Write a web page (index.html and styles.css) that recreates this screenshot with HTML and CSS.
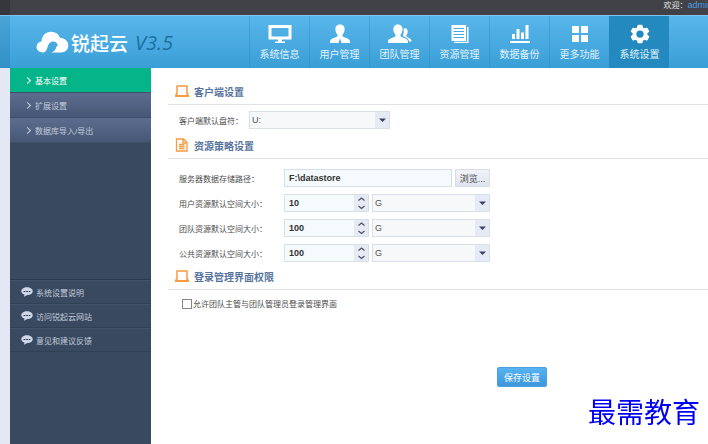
FILE: index.html
```html
<!DOCTYPE html>
<html lang="zh-CN">
<head>
    <meta charset="UTF-8">
    <meta name="viewport" content="width=device-width, initial-scale=1.0">
    <title>锐起云 - 系统设置</title>
    <link rel="stylesheet" href="styles.css">
</head>
<body>
    <div class="topbar">
        <span class="welcome">欢迎：<a href="#">admin</a></span>
    </div>

    <header class="header">
        <div class="logo">
            <svg width="34" height="22" viewBox="0 0 34 22">
                <path fill="#fff" d="M7 21.500C3 21.500.5 19 .5 15.800c0-3 2-5 5-5.300C5.800 4.500 10 .8 15 .8c4.500 0 7.500 2 9 6 4.800.2 8.300 3.500 8.300 7.700 0 4-3 7-7 7h-9.800c2.500-1.200 4.500-3 5-6l1.300-1.200c-.5-3-3.300-4.600-6.300-3.600-3.700 1.500-3.500 5.300-4.800 7.800-.8 1.800-2 3-3.700 3z"/>
            </svg>
            <span class="logo-name">锐起云</span>
            <span class="logo-version">V3.5</span>
        </div>
        <nav class="nav">
            <a href="#">
                <svg width="24" height="20" viewBox="0 0 24 20" fill="#fff">
                    <path fill-rule="evenodd" d="M.5 1h23v14.500H.5zM3.500 4v8.500h17V4z"/>
                    <path d="M10 15h4v2.500h3V19H7v-1.500h3z"/>
                </svg>
                <span>系统信息</span>
            </a>
            <a href="#">
                <svg width="24" height="20" viewBox="0 0 24 20" fill="#fff">
                    <path d="M12 .5c3 0 4.800 2 4.600 5-.1 2.500-1 4-2.100 5.200v1.500c1.500 1.500 7.500 2 7.500 5.300V19h-8.500L12 14.500 10.500 19H2v-1.500c0-3.300 6-3.800 7.500-5.300v-1.500C8.400 9.500 7.500 8 7.400 5.500 7.200 2.500 9 .5 12 .5z"/>
                </svg>
                <span>用户管理</span>
            </a>
            <a href="#">
                <svg width="24" height="20" viewBox="0 0 24 20" fill="#fff">
                    <path d="M10 .5c3 0 4.700 2 4.500 5-.1 2.500-1 4-2 5.200v1.500c1.500 1.500 7.500 2 7.500 5.300V19H0v-1.500c0-3.300 6-3.800 7.500-5.300v-1.500c-1-1.200-2-2.700-2.100-5.200C5.200 2.500 7 .5 10 .5z"/>
                    <path d="M15.500 4.500c2-1 4.200.2 4.200 3 0 1.800-.6 3-1.300 4v1c1 1.200 5.300 2 5.300 5h-2.500c-.5-3.200-4-4-6.200-5.500v-1c.8-1.500 1-4 .5-6.500z"/>
                </svg>
                <span>团队管理</span>
            </a>
            <a href="#">
                <svg width="24" height="20" viewBox="0 0 24 20">
                    <path fill="#fff" d="M3.500 1H18v16H3.500zM19 3h1.500v16H6v-1.200h13z"/>
                    <path stroke="#4aaae0" stroke-width="1.200" d="M5.500 4.500H16M5.500 7.500H16M5.500 10.500H16M5.500 13.500H16"/>
                </svg>
                <span>资源管理</span>
            </a>
            <a href="#">
                <svg width="24" height="20" viewBox="0 0 24 20" fill="#fff">
                    <path d="M4 10h3v5H4zM8.500 5h3v10h-3zM13 8.500h3V15h-3zM17.500 1h3v14h-3zM2 17h20v2H2z"/>
                </svg>
                <span>数据备份</span>
            </a>
            <a href="#">
                <svg width="24" height="20" viewBox="0 0 24 20" fill="#fff">
                    <path d="M4 2h7v7H4zM13 2h7v7h-7zM4 11h7v7H4zM13 11h7v7h-7z"/>
                </svg>
                <span>更多功能</span>
            </a>
            <a href="#" class="active">
                <svg width="24" height="20" viewBox="0 0 24 20" fill="#fff" stroke="#fff" stroke-width="1.500" stroke-linejoin="round">
                    <path fill-rule="evenodd" d="M10.300 1.500h3.400l.8 2.700 1.500.9 2.800-.7 1.700 2.900-2 2v1.600l2 2-1.700 2.900-2.800-.7-1.500.9-.8 2.500h-3.400l-.8-2.500-1.500-.9-2.800.7-1.700-2.900 2-2V9.300l-2-2 1.700-2.900 2.800.7 1.500-.9zM12 5.700a4.400 4.400 0 1 0 0 8.800 4.400 4.400 0 0 0 0-8.800z"/>
                </svg>
                <span>系统设置</span>
            </a>
        </nav>
    </header>

    <div class="page">
        <aside class="sidebar">
            <nav class="menu">
                <a href="#" class="active">基本设置</a>
                <a href="#">扩展设置</a>
                <a href="#">数据库导入/导出</a>
            </nav>
            <nav class="help">
                <a href="#">
                    <svg width="12" height="10" viewBox="0 0 12 10"><path fill="#ced6e6" d="M6 .3c3.300 0 5.700 1.700 5.700 3.900S9.300 8 6.300 8L3 9.800l.4-2.200C1.500 7 .3 5.700.3 4.200.3 2 2.700.3 6 .3z"/><path stroke="#384960" stroke-dasharray="2 .6" d="M2.500 4.500h7"/></svg>
                    系统设置说明
                </a>
                <a href="#">
                    <svg width="12" height="10" viewBox="0 0 12 10"><path fill="#ced6e6" d="M6 .3c3.300 0 5.700 1.700 5.700 3.900S9.300 8 6.300 8L3 9.800l.4-2.200C1.500 7 .3 5.700.3 4.200.3 2 2.700.3 6 .3z"/><path stroke="#384960" stroke-dasharray="2 .6" d="M2.500 4.500h7"/></svg>
                    访问锐起云网站
                </a>
                <a href="#">
                    <svg width="12" height="10" viewBox="0 0 12 10"><path fill="#ced6e6" d="M6 .3c3.300 0 5.700 1.700 5.700 3.900S9.300 8 6.300 8L3 9.800l.4-2.200C1.500 7 .3 5.700.3 4.200.3 2 2.700.3 6 .3z"/><path stroke="#384960" stroke-dasharray="2 .6" d="M2.500 4.500h7"/></svg>
                    意见和建议反馈
                </a>
            </nav>
        </aside>

        <main class="content">
            <form>
                <h2>
                    <svg width="16" height="14" viewBox="0 0 16 14" fill="none" stroke="#f79a42" stroke-width="1.500"><path d="M3 10V2h10v8"/><path stroke-width="2" d="M1 12h14M2.500 9.500v2M13.500 9.500v2"/></svg>
                    客户端设置
                </h2>
                <div class="row">
                    <label class="short" for="drive">客户端默认盘符：</label>
                    <div class="select drive">
                        <select id="drive"><option>U:</option></select>
                        <svg width="14" height="16" viewBox="0 0 14 16"><path fill="#3c4560" d="M4 6.500h7L7.500 10z"/></svg>
                    </div>
                </div>

                <h2>
                    <svg width="16" height="14" viewBox="0 0 16 14" fill="none" stroke="#f79a42" stroke-width="1.300"><path d="M2.500 1h7l3.500 3.500V13H2.500zM9 1v4h4"/><path d="M5 6.500h5.500M5 8.500h5.500M5 10.500h5.500"/></svg>
                    资源策略设置
                </h2>
                <div class="rows">
                    <div class="row">
                        <label for="path">服务器数据存储路径：</label>
                        <input type="text" id="path" value="F:\datastore">
                        <button type="button" class="browse">浏览...</button>
                    </div>
                    <div class="row">
                        <label for="userSize">用户资源默认空间大小：</label>
                        <div class="spinner">
                            <input type="number" id="userSize" value="10">
                            <svg width="14" height="16" viewBox="0 0 14 16" fill="none" stroke="#4b5164" stroke-width="1.200"><path d="M4.500 5.500l3-2.500 3 2.500M4.500 11l3 2.500 3-2.500"/></svg>
                        </div>
                        <div class="select unit">
                            <select aria-label="单位"><option>G</option></select>
                            <svg width="14" height="16" viewBox="0 0 14 16"><path fill="#3c4560" d="M4 6.500h7L7.500 10z"/></svg>
                        </div>
                    </div>
                    <div class="row">
                        <label for="teamSize">团队资源默认空间大小：</label>
                        <div class="spinner">
                            <input type="number" id="teamSize" value="100">
                            <svg width="14" height="16" viewBox="0 0 14 16" fill="none" stroke="#4b5164" stroke-width="1.200"><path d="M4.500 5.500l3-2.500 3 2.500M4.500 11l3 2.500 3-2.500"/></svg>
                        </div>
                        <div class="select unit">
                            <select aria-label="单位"><option>G</option></select>
                            <svg width="14" height="16" viewBox="0 0 14 16"><path fill="#3c4560" d="M4 6.500h7L7.500 10z"/></svg>
                        </div>
                    </div>
                    <div class="row">
                        <label for="publicSize">公共资源默认空间大小：</label>
                        <div class="spinner">
                            <input type="number" id="publicSize" value="100">
                            <svg width="14" height="16" viewBox="0 0 14 16" fill="none" stroke="#4b5164" stroke-width="1.200"><path d="M4.500 5.500l3-2.500 3 2.500M4.500 11l3 2.500 3-2.500"/></svg>
                        </div>
                        <div class="select unit">
                            <select aria-label="单位"><option>G</option></select>
                            <svg width="14" height="16" viewBox="0 0 14 16"><path fill="#3c4560" d="M4 6.500h7L7.500 10z"/></svg>
                        </div>
                    </div>
                </div>

                <h2>
                    <svg width="16" height="14" viewBox="0 0 16 14" fill="none" stroke="#f79a42" stroke-width="1.500"><path d="M3 10V2h10v8"/><path stroke-width="2" d="M1 12h14M2.500 9.500v2M13.500 9.500v2"/></svg>
                    登录管理界面权限
                </h2>
                <div class="check">
                    <input type="checkbox" id="allow">
                    <label for="allow">允许团队主管与团队管理员登录管理界面</label>
                </div>

                <button type="submit" class="save">保存设置</button>
            </form>
        </main>
    </div>

    <div class="watermark">最需教育</div>
</body>
</html>
```

FILE: styles.css
```css
* {
    box-sizing: border-box;
}
body {
    margin: 0;
    min-height: 100vh;
    display: flex;
    flex-direction: column;
    overflow: hidden;
    background: #fff;
    color: #4c4c4c;
    font-family: "Liberation Sans", "Noto Sans CJK SC", sans-serif;
    font-size: 8px;
}
a {
    color: inherit;
    text-decoration: none;
}
svg {
    flex: none;
}
input,
select,
button {
    margin: 0;
    font-family: inherit;
    font-size: 9px;
}

/* top */
.topbar {
    display: flex;
    justify-content: flex-end;
    height: 15px;
    overflow: hidden;
    background: linear-gradient(90deg, #36373c 10px, #414247 10px);
    color: #e6e6e6;
    line-height: 10px;
    white-space: nowrap;
}
.welcome {
    margin-right: -4px;
}
.welcome a {
    color: #4a9be0;
    font-size: 9px;
}
.header {
    display: flex;
    height: 53px;
    border-top: 1px solid #7cc6ee;
    background: linear-gradient(90deg, rgba(0, 60, 110, 0.15) 10px, transparent 10px), linear-gradient(#58b6ea, #3a9fd7);
}
.logo {
    display: flex;
    align-items: center;
    flex: none;
    width: 249px;
    padding-left: 36px;
    color: #fff;
}
.logo-name {
    margin-left: 1px;
    font-size: 19px;
    font-weight: 500;
}
.logo-version {
    margin-left: 7px;
    color: #1c6f9f;
    font-family: "Open Sans", sans-serif;
    font-size: 20px;
    font-style: italic;
}
.nav {
    display: flex;
}
.nav a {
    display: flex;
    flex-direction: column;
    align-items: center;
    width: 60px;
    padding-top: 8px;
    border-left: 1px solid rgba(40, 130, 185, 0.35);
    color: #e2f3fc;
    font-size: 10px;
    line-height: 14px;
}
.nav span {
    margin-top: 4px;
}
.nav .active {
    background: #2389bf;
}

/* sidebar */
.page {
    display: flex;
    flex: 1;
    padding-left: 10px;
    background: #e4e8f4;
}
.sidebar {
    flex: none;
    width: 141px;
    background: #384960;
    color: #c3cbda;
}
.menu {
    height: 211px;
}
.menu a {
    display: flex;
    align-items: center;
    height: 25px;
    border-bottom: 1px solid #3f4f69;
    padding-left: 15px;
    background: linear-gradient(#5b6c8e, #475876);
}
.menu a::before {
    content: "";
    width: 4px;
    height: 4px;
    margin-right: 5px;
    border: solid currentColor;
    border-width: 1px 1px 0 0;
    transform: rotate(45deg);
}
.menu .active {
    background: #06b489;
    color: #fff;
}
.help {
    border-top: 1px solid #2c3a50;
}
.help a {
    display: flex;
    align-items: center;
    gap: 3px;
    height: 24px;
    padding-left: 11px;
    border-top: 1px solid #42546d;
    border-bottom: 1px solid #304055;
}

/* settings form */
.content {
    flex: 1;
    min-width: 0;
    padding: 10px 0 0 17px;
    background: #fff;
}
h2 {
    display: flex;
    align-items: center;
    gap: 4px;
    height: 27px;
    margin: 0;
    padding-left: 6px;
    border-bottom: 1px solid #e2e2e4;
    color: #56749c;
    font-size: 10px;
    font-weight: 600;
}
.row {
    display: flex;
    align-items: center;
    height: 18px;
    padding-left: 11px;
}
.row label {
    flex: none;
    width: 105px;
}
.row .short {
    width: 70px;
}
form > .row {
    margin: 6px 0 3px;
}
.rows {
    display: grid;
    gap: 7px;
    padding: 10px 0 1px;
}
.row input {
    width: 168px;
    height: 18px;
    padding: 0 4px;
    border: 1px solid #d5dfe8;
    background: #f5fafd;
    color: #333;
    font-weight: bold;
}
.spinner,
.select {
    display: flex;
    align-items: center;
    height: 18px;
    border: 1px solid #d9dfe8;
    background: #f6f8fa;
}
.spinner svg,
.select svg {
    background: #e6eaf4;
}
.spinner {
    width: 85px;
}
.spinner input {
    flex: 1;
    min-width: 0;
    height: 16px;
    border: 0;
    appearance: textfield;
}
.spinner input::-webkit-inner-spin-button {
    display: none;
}
.select select {
    flex: 1;
    height: 16px;
    padding: 0 2px;
    border: 0;
    background: none;
    color: #555;
    appearance: none;
}
.drive {
    width: 141px;
}
.unit {
    width: 118px;
    margin-left: 3px;
}
.browse {
    width: 35px;
    height: 18px;
    margin-left: 3px;
    padding: 0;
    border: 1px solid #d9dde8;
    background: linear-gradient(#f1f3f9, #e0e4ef);
    color: #444;
}
.check {
    display: flex;
    align-items: center;
    gap: 1px;
    margin-top: 8px;
    padding-left: 14px;
}
.check input {
    width: 10px;
    height: 10px;
    border: 1px solid #888;
    background: #fff;
    appearance: none;
}
.check input:checked {
    background: #3a9fd7;
}
.save {
    display: block;
    width: 50px;
    height: 20px;
    margin: 58px 0 0 329px;
    padding: 0;
    border: 1px solid #4a9fe0;
    border-radius: 2px;
    background: linear-gradient(#56b2f0, #3c97dc);
    color: #fff;
}
.watermark {
    position: fixed;
    right: 8px;
    bottom: 16px;
    color: #0000f0;
    font-family: KaiTi, "AR PL UKai CN", "Noto Sans CJK SC", serif;
    font-size: 28px;
    font-weight: 400;
    line-height: 34px;
}
```
